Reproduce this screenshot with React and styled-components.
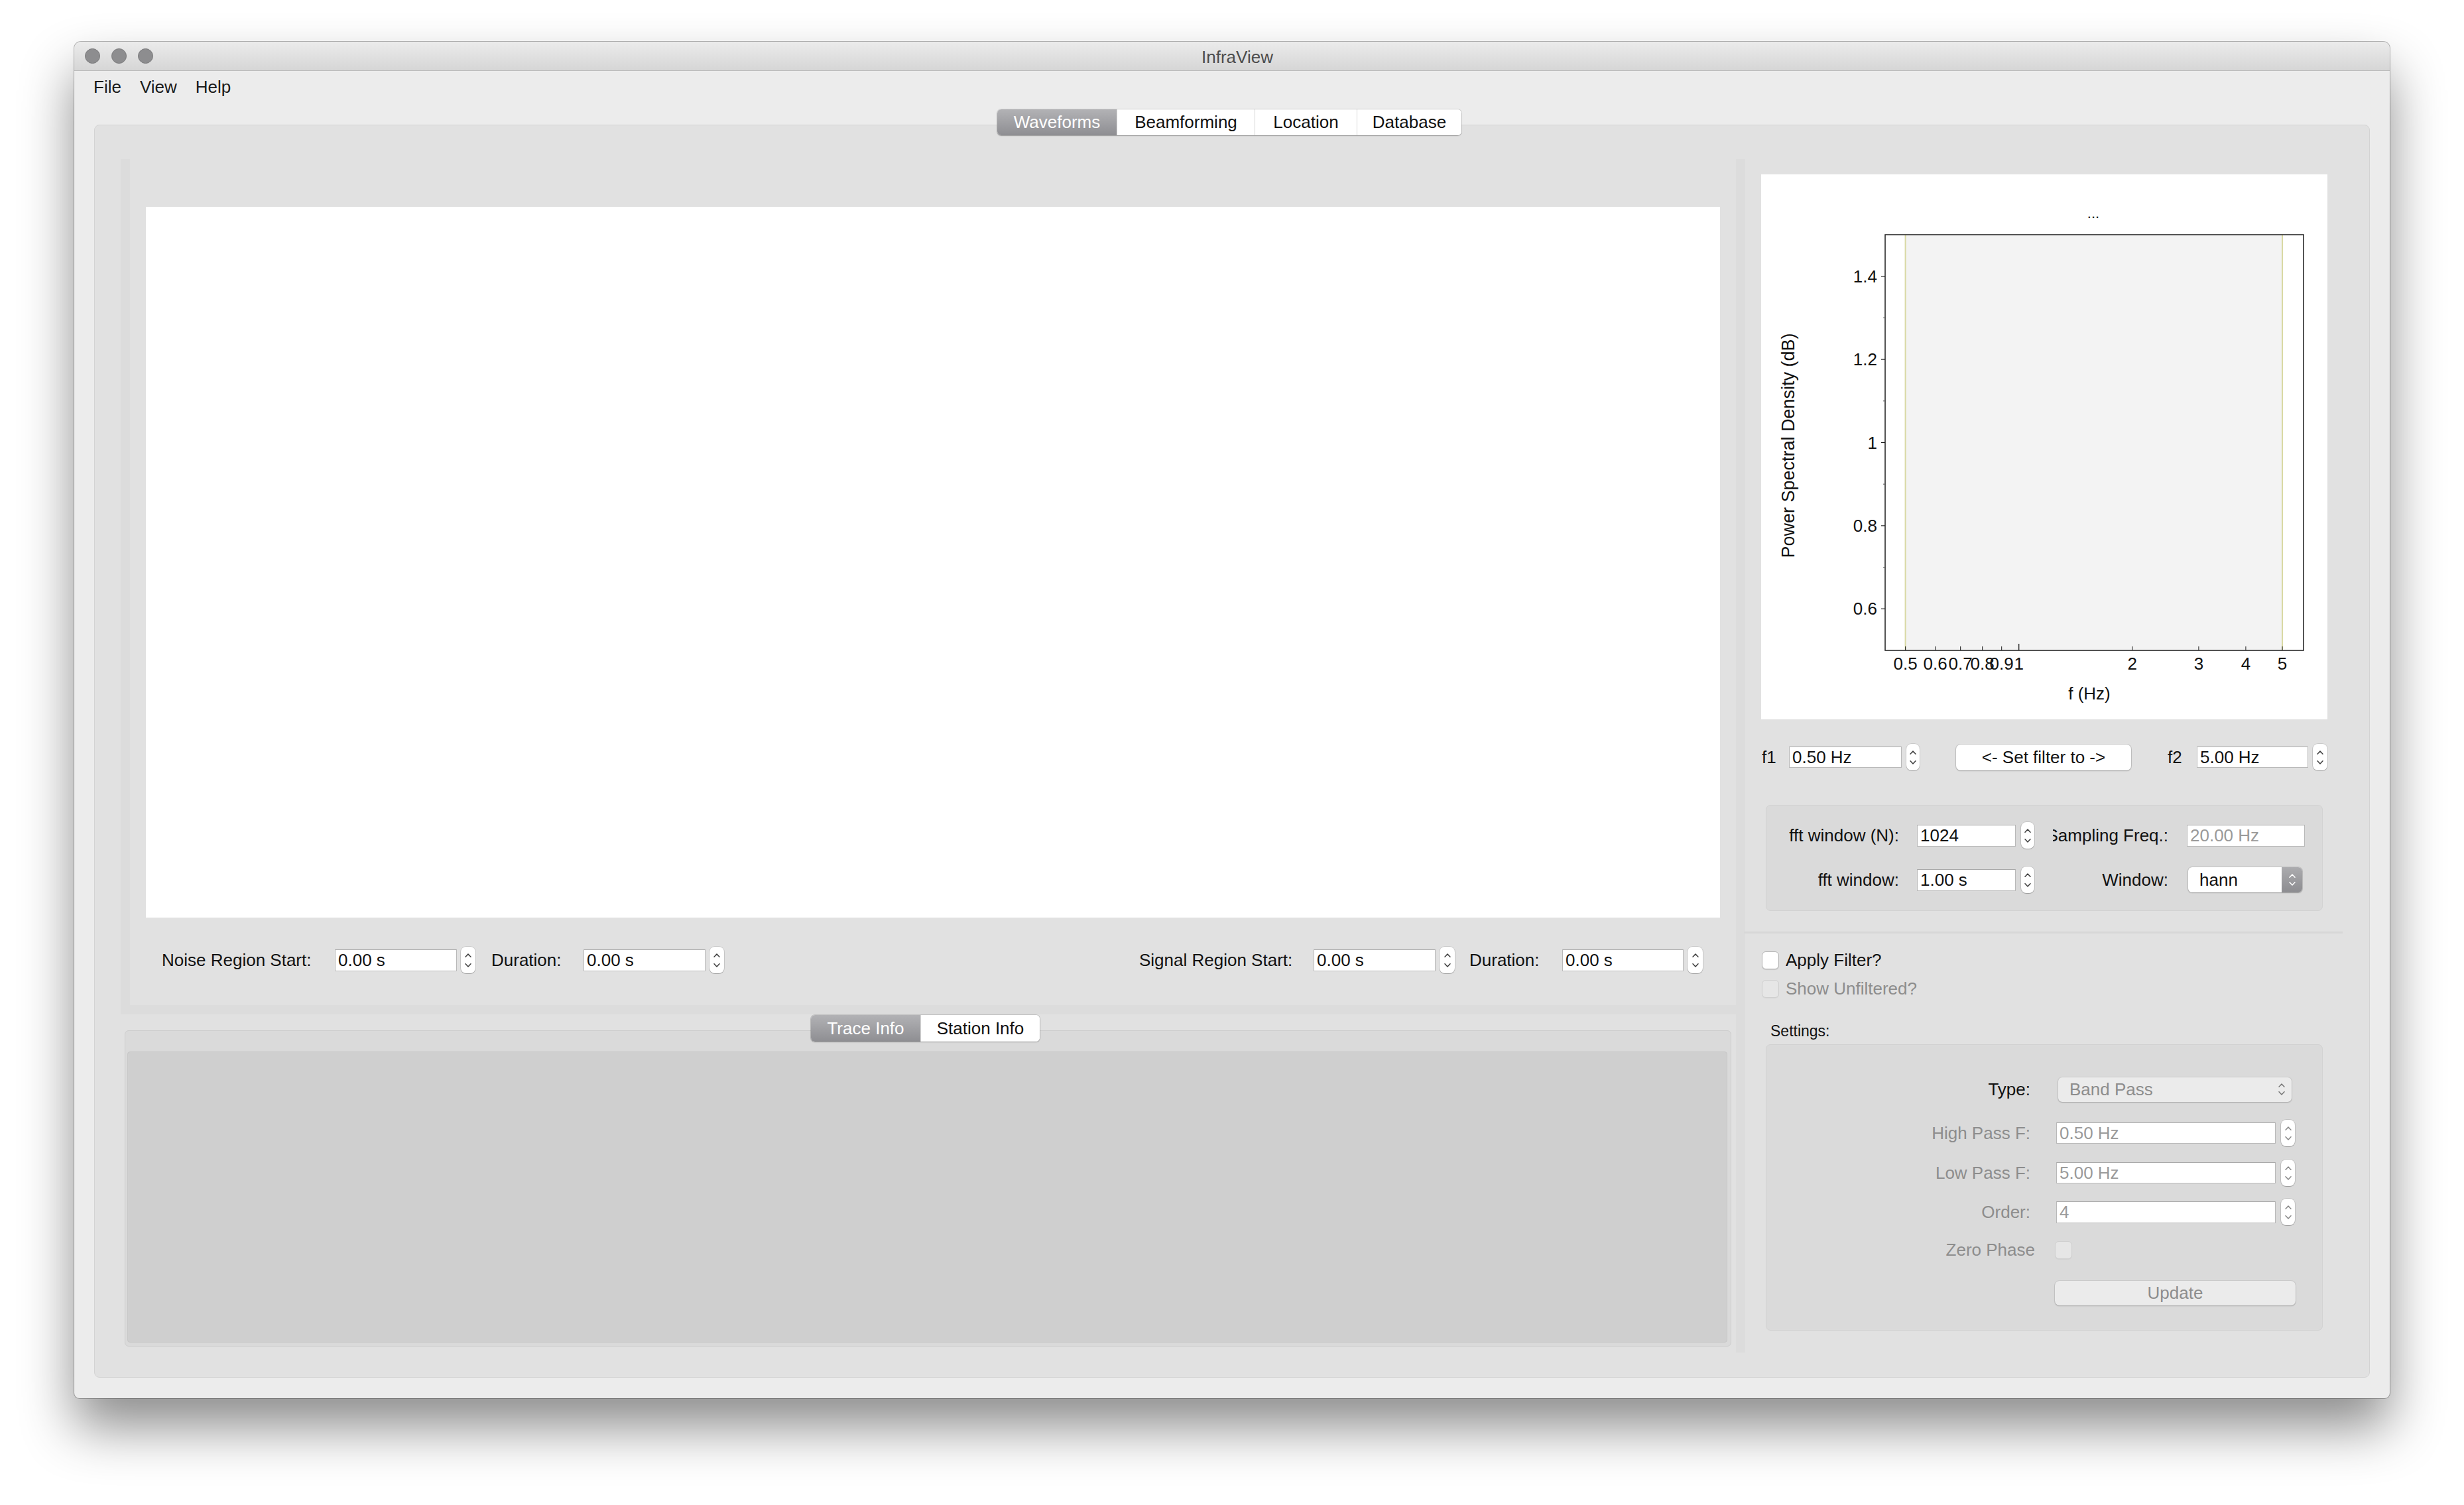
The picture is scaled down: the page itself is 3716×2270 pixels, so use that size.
import React from 'react';
import styled, { createGlobalStyle } from 'styled-components';

const GlobalStyle = createGlobalStyle`
  html, body {
    margin: 0;
    padding: 0;
    background: #ffffff;
  }
  body {
    font-family: 'Liberation Sans', Arial, sans-serif;
    font-size: 26px;
    color: #111;
  }
  * { box-sizing: border-box; }
  svg { display: block; }
`;

const Page = styled.div`
  width: 3716px;
  height: 2270px;
  overflow: hidden;
  padding: 63px 0 0 112px;
`;

const Window = styled.div`
  width: 3492px;
  height: 2046px;
  background: #ececec;
  border-radius: 10px 10px 8px 8px;
  box-shadow: 0 0 0 1px rgba(0, 0, 0, 0.28), 0 44px 80px rgba(0, 0, 0, 0.45);
  display: flex;
  flex-direction: column;
  overflow: hidden;
`;

const TitleBar = styled.div`
  flex: 0 0 44px;
  display: grid;
  grid-template-columns: 1fr auto 1fr;
  align-items: center;
  padding-left: 16px;
  background: linear-gradient(#ebebeb, #d6d6d6);
  border-bottom: 1px solid #bcbcbc;
`;

const Lights = styled.div`
  display: flex;
  gap: 17px;
`;

const Light = styled.span`
  width: 23px;
  height: 23px;
  border-radius: 50%;
  background: #8d8d8f;
  border: 1px solid #7a7a7c;
`;

const Title = styled.div`
  color: #4c4c4c;
  font-size: 26px;
  padding-top: 3px;
`;

const MenuBar = styled.div`
  flex: 0 0 46px;
  display: flex;
  align-items: center;
  padding: 3px 0 0 15px;
`;

const MenuItem = styled.span`
  padding: 0 14px;
  color: #1a1a1a;
`;

const TabArea = styled.div`
  flex: 1;
  display: flex;
  flex-direction: column;
  padding: 12px 30px 31px 30px;
`;

const SegBar = styled.div`
  align-self: center;
  display: flex;
  height: ${p => p.$h}px;
  background: #fff;
  border-radius: 6px;
  box-shadow: 0 0 0 1px rgba(0, 0, 0, 0.13), 0 1px 2px rgba(0, 0, 0, 0.22);
  position: relative;
  z-index: 1;
  overflow: hidden;
  transform: translateX(${p => p.$shift || 0}px);
`;

const SegTab = styled.div`
  width: ${p => p.$w}px;
  display: flex;
  align-items: center;
  justify-content: center;
  color: ${p => (p.$active ? '#fff' : '#111')};
  background: ${p => (p.$active ? 'linear-gradient(#b2b2b5, #8e8e92)' : '#fff')};
  border-left: ${p => (p.$first || p.$active ? 'none' : '1px solid #d6d6d6')};
`;

const Frame = styled.div`
  flex: 1;
  margin-top: -16px;
  background: #e1e1e1;
  border: 1px solid #d3d3d3;
  border-radius: 8px;
  padding: 51px 39px 37px 39px;
  display: flex;
`;

const LeftColumn = styled.div`
  flex: 0 0 2436px;
  display: flex;
  flex-direction: column;
`;

const TopSplit = styled.div`
  flex: 0 0 1290px;
  display: flex;
  background: #dcdcdc;
  padding: 0 0 14px 14px;
`;

const WavePanel = styled.div`
  flex: 1;
  display: flex;
  flex-direction: column;
  background: #e1e1e1;
  padding: 72px 24px 0 24px;
`;

const WaveCanvas = styled.div`
  flex: 0 0 1072px;
  background: #ffffff;
`;

const RegionRow = styled.div`
  margin-top: 44px;
  height: 40px;
  display: flex;
  align-items: center;
  justify-content: space-between;
  padding: 0 26px 0 24px;
`;

const Group = styled.div`
  display: flex;
  align-items: center;
`;

const Label = styled.span`
  flex: 0 0 auto;
  display: flex;
  justify-content: ${p => (p.$align === 'right' ? 'flex-end' : 'flex-start')};
  width: ${p => (p.$w ? `${p.$w}px` : 'auto')};
  margin-left: ${p => p.$ml || 0}px;
  margin-right: ${p => p.$mr || 0}px;
  white-space: nowrap;
  overflow: hidden;
  color: ${p => (p.$dim ? '#8d8d8d' : '#111')};
  font-size: ${p => p.$size || 26}px;
`;

const Field = styled.input`
  flex: 0 0 auto;
  width: ${p => p.$w}px;
  height: ${p => p.$h || 33}px;
  margin-left: ${p => p.$ml || 0}px;
  padding: 0 0 0 4px;
  font-family: inherit;
  font-size: 26px;
  color: ${p => (p.$dim ? '#9a9a9a' : '#111')};
  background: #fff;
  border: 1px solid #b9b9b9;
  border-top-color: #a9a9a9;
  border-radius: 0;
  outline: none;
`;

const SpinBox = styled.div`
  flex: 0 0 auto;
  width: ${p => p.$w || 22}px;
  height: 40px;
  margin-left: ${p => p.$ml ?? 6}px;
  border-radius: 8px;
  background: #fff;
  box-shadow: 0 0 0 1px rgba(0, 0, 0, 0.1), 0 1px 1px rgba(0, 0, 0, 0.2);
  display: flex;
  flex-direction: column;
  align-items: center;
  justify-content: center;
  gap: 9px;
`;

const RightHandle = styled.div`
  flex: 0 0 14px;
  background: #dcdcdc;
`;

const BottomSplit = styled.div`
  flex: 1;
  display: flex;
  flex-direction: column;
  padding: 1px 7px 9px 6px;
`;

const InfoFrame = styled.div`
  flex: 1;
  margin-top: -17px;
  background: #dadada;
  border: 1px solid #cdcdcd;
  border-radius: 6px;
  padding: 31px 5px 5px 3px;
  display: flex;
`;

const InfoPane = styled.div`
  flex: 1;
  background: #cfcfcf;
  border: 1px solid #c7c7c7;
  border-radius: 4px;
`;

const RightPanel = styled.div`
  flex: 1;
  display: flex;
  flex-direction: column;
  padding: 23px 24px 0 24px;
`;

const PlotBox = styled.div`
  flex: 0 0 822px;
  min-height: 0;
  background: #fff;
`;

const FreqRow = styled.div`
  margin-top: 37px;
  flex: 0 0 40px;
  min-height: 0;
  display: flex;
  align-items: center;
  justify-content: space-between;
`;

const PushButton = styled.div`
  width: ${p => p.$w}px;
  height: ${p => p.$h || 39}px;
  margin-left: ${p => p.$ml || 0}px;
  border-radius: 7px;
  background: ${p => (p.$disabled ? '#ebebeb' : '#fff')};
  color: ${p => (p.$disabled ? '#8d8d8d' : '#111')};
  box-shadow: 0 0 0 1px rgba(0, 0, 0, ${p => (p.$disabled ? 0.06 : 0.1)}), 0 1px 2px rgba(0, 0, 0, 0.22);
  display: flex;
  align-items: center;
  justify-content: center;
`;

const GroupBox = styled.div`
  flex: 0 0 ${p => p.$h}px;
  min-height: 0;
  margin: ${p => p.$mt}px 7px 0 7px;
  background: #dadada;
  border: 1px solid #d2d2d2;
  border-radius: 7px;
  padding: ${p => p.$pad};
  display: flex;
  flex-direction: column;
`;

const BoxRow = styled.div`
  flex: 0 0 40px;
  margin-top: ${p => p.$mt || 0}px;
  display: flex;
  align-items: center;
`;

const FormRow = styled.div`
  flex: 0 0 40px;
  margin-top: ${p => p.$mt || 0}px;
  display: grid;
  grid-template-columns: 1fr 362px;
  column-gap: 38px;
  align-items: center;
`;

const FieldCell = styled.div`
  display: flex;
  align-items: center;
`;

const Combo = styled.div`
  width: ${p => p.$w}px;
  height: ${p => p.$h}px;
  margin-left: ${p => p.$ml || 0}px;
  border-radius: 6px;
  background: ${p => (p.$disabled ? '#ebebeb' : '#fff')};
  color: ${p => (p.$disabled ? '#8d8d8d' : '#111')};
  box-shadow: 0 0 0 1px rgba(0, 0, 0, ${p => (p.$disabled ? 0.06 : 0.1)}), 0 1px 2px rgba(0, 0, 0, 0.2);
  display: flex;
  align-items: center;
  overflow: hidden;
`;

const ComboText = styled.span`
  flex: 1;
  padding-left: 17px;
`;

const ComboArrows = styled.div`
  width: ${p => p.$w}px;
  align-self: stretch;
  background: ${p => (p.$accent ? 'linear-gradient(#ababae, #8c8c90)' : 'transparent')};
  display: flex;
  flex-direction: column;
  align-items: center;
  justify-content: center;
  gap: 6px;
`;

const Divider = styled.div`
  flex: 0 0 3px;
  margin: 31px -23px 0 -26px;
  background: #d7d7d7;
`;

const CheckRow = styled.div`
  flex: 0 0 27px;
  min-height: 0;
  margin-top: ${p => p.$mt}px;
  display: flex;
  align-items: center;
  gap: 10px;
  padding-left: 1px;
`;

const CheckBox = styled.span`
  flex: 0 0 auto;
  width: 26px;
  height: 27px;
  margin-left: ${p => p.$ml || 0}px;
  border-radius: 6px;
  background: ${p => (p.$disabled ? '#e6e6e6' : '#fff')};
  border: 1px solid ${p => (p.$disabled ? '#cfcfcf' : '#b3b3b3')};
  box-shadow: 0 1px 1px rgba(0, 0, 0, ${p => (p.$disabled ? 0.04 : 0.12)});
`;

const SectionTitle = styled.div`
  flex: 0 0 26px;
  margin: 37px 0 0 14px;
  line-height: 26px;
  font-size: 23px;
  color: #111;
`;

const Chevron = ({ dir, color = '#3c3c3c' }) => (
  <svg width="10" height="6" viewBox="0 0 10 6">
    <path
      d={dir === 'up' ? 'M1 5.2 L5 1 L9 5.2' : 'M1 0.8 L5 5 L9 0.8'}
      fill="none"
      stroke={color}
      strokeWidth="1.5"
      strokeLinecap="round"
      strokeLinejoin="round"
    />
  </svg>
);

const Spinner = ({ ml, w, color }) => (
  <SpinBox $ml={ml} $w={w}>
    <Chevron dir="up" color={color} />
    <Chevron dir="down" color={color} />
  </SpinBox>
);

// log-x / linear-y mapping of the empty PSD plot
const xOf = f => 217.6 + 568.4 * Math.log10(f / 0.5);
const yOf = v => 91 + (1.5 - v) * 627;

const xTicks = [
  { f: 0.5, label: '0.5', major: false },
  { f: 0.6, label: '0.6', major: false },
  { f: 0.7, label: '0.7', major: false },
  { f: 0.8, label: '0.8', major: false },
  { f: 0.9, label: '0.9', major: false },
  { f: 1, label: '1', major: true },
  { f: 2, label: '2', major: false },
  { f: 3, label: '3', major: false },
  { f: 4, label: '4', major: false },
  { f: 5, label: '5', major: false },
];

const yMajor = [0.6, 0.8, 1, 1.2, 1.4];
const yMinor = [0.7, 0.9, 1.1, 1.3];

const SpectrumPlot = () => (
  <svg width="854" height="822" viewBox="0 0 854 822" fontFamily="'Liberation Sans', Arial, sans-serif">
    <rect x={xOf(0.5)} y="91" width={xOf(5) - xOf(0.5)} height="627" fill="#f3f3f3" />
    <line x1={xOf(0.5)} y1="91" x2={xOf(0.5)} y2="718" stroke="#d9d9a4" strokeWidth="2" />
    <line x1={xOf(5)} y1="91" x2={xOf(5)} y2="718" stroke="#d9d9a4" strokeWidth="2" />
    <rect x="187" y="91" width="631" height="627" fill="none" stroke="#1c1c1c" strokeWidth="1.5" />
    <text x="501" y="66" fontSize="22" textAnchor="middle" fill="#111">...</text>
    {yMajor.map(v => (
      <g key={v}>
        <line x1="181" y1={yOf(v)} x2="187" y2={yOf(v)} stroke="#1c1c1c" strokeWidth="1.2" />
        <text x="175" y={yOf(v) + 9} fontSize="26" textAnchor="end" fill="#111">{String(v)}</text>
      </g>
    ))}
    {yMinor.map(v => (
      <line key={v} x1="184" y1={yOf(v)} x2="187" y2={yOf(v)} stroke="#555" strokeWidth="1" />
    ))}
    {xTicks.map(t => (
      <g key={t.label}>
        <line x1={xOf(t.f)} y1={t.major ? 708 : 712} x2={xOf(t.f)} y2="718" stroke="#1c1c1c" strokeWidth={t.major ? 1.3 : 1} />
        <text x={xOf(t.f)} y="747" fontSize="26" textAnchor="middle" fill="#111">{t.label}</text>
      </g>
    ))}
    <text x="495" y="792" fontSize="26" textAnchor="middle" fill="#111">f (Hz)</text>
    <text transform="translate(50 409) rotate(-90)" fontSize="27" textAnchor="middle" fill="#111">
      Power Spectral Density (dB)
    </text>
  </svg>
);

const App = () => (
  <Page>
    <GlobalStyle />
    <Window>
      <TitleBar>
        <Lights>
          <Light />
          <Light />
          <Light />
        </Lights>
        <Title>InfraView</Title>
        <span />
      </TitleBar>
      <MenuBar>
        <MenuItem>File</MenuItem>
        <MenuItem>View</MenuItem>
        <MenuItem>Help</MenuItem>
      </MenuBar>
      <TabArea>
        <SegBar $h={39} $shift={-4}>
          <SegTab $w={180} $active $first>Waveforms</SegTab>
          <SegTab $w={208}>Beamforming</SegTab>
          <SegTab $w={154}>Location</SegTab>
          <SegTab $w={158}>Database</SegTab>
        </SegBar>
        <Frame>
          <LeftColumn>
            <TopSplit>
              <WavePanel>
                <WaveCanvas />
                <RegionRow>
                  <Group>
                    <Label $w={261}>Noise Region Start:</Label>
                    <Field $w={184} defaultValue="0.00 s" />
                    <Spinner />
                    <Label $w={139} $ml={24}>Duration:</Label>
                    <Field $w={184} defaultValue="0.00 s" />
                    <Spinner />
                  </Group>
                  <Group>
                    <Label $w={263}>Signal Region Start:</Label>
                    <Field $w={184} defaultValue="0.00 s" />
                    <Spinner w={23} />
                    <Label $w={140} $ml={22}>Duration:</Label>
                    <Field $w={183} defaultValue="0.00 s" />
                    <Spinner w={23} />
                  </Group>
                </RegionRow>
              </WavePanel>
            </TopSplit>
            <BottomSplit>
              <SegBar $h={40} $shift={-4}>
                <SegTab $w={165} $active $first>Trace Info</SegTab>
                <SegTab $w={180}>Station Info</SegTab>
              </SegBar>
              <InfoFrame>
                <InfoPane />
              </InfoFrame>
            </BottomSplit>
          </LeftColumn>
          <RightHandle />
          <RightPanel>
            <PlotBox>
              <SpectrumPlot />
            </PlotBox>
            <FreqRow>
              <Group>
                <Label $w={41} $ml={1}>f1</Label>
                <Field $w={170} $h={32} defaultValue="0.50 Hz" />
                <Spinner ml={7} w={20} />
              </Group>
              <PushButton $w={264}>&lt;- Set filter to -&gt;</PushButton>
              <Group>
                <Label $w={44}>f2</Label>
                <Field $w={168} $h={32} defaultValue="5.00 Hz" />
                <Spinner ml={7} w={22} />
              </Group>
            </FreqRow>
            <GroupBox $mt={52} $h={160} $pad="25px 26px 26px 19px">
              <BoxRow>
                <Label $w={181} $align="right">fft window (N):</Label>
                <Field $w={149} $ml={27} defaultValue="1024" />
                <Spinner ml={8} w={20} />
                <Label $w={174} $ml={28} $align="right">Sampling Freq.:</Label>
                <Field $w={178} $ml={28} $dim defaultValue="20.00 Hz" />
              </BoxRow>
              <BoxRow $mt={27}>
                <Label $w={181} $align="right">fft window:</Label>
                <Field $w={149} $ml={27} defaultValue="1.00 s" />
                <Spinner ml={8} w={20} />
                <Label $w={176} $ml={26} $align="right">Window:</Label>
                <Combo $w={172} $h={38} $ml={30}>
                  <ComboText>hann</ComboText>
                  <ComboArrows $w={31} $accent>
                    <Chevron dir="up" color="#fff" />
                    <Chevron dir="down" color="#fff" />
                  </ComboArrows>
                </Combo>
              </BoxRow>
            </GroupBox>
            <Divider />
            <CheckRow $mt={27}>
              <CheckBox />
              <Label>Apply Filter?</Label>
            </CheckRow>
            <CheckRow $mt={16}>
              <CheckBox $disabled />
              <Label $dim>Show Unfiltered?</Label>
            </CheckRow>
            <SectionTitle>Settings:</SectionTitle>
            <GroupBox $mt={7} $h={432} $pad="47px 40px 0 19px">
              <FormRow>
                <Label $align="right">Type:</Label>
                <FieldCell>
                  <Combo $w={352} $h={37} $ml={4} $disabled>
                    <ComboText>Band Pass</ComboText>
                    <ComboArrows $w={30}>
                      <Chevron dir="up" color="#777" />
                      <Chevron dir="down" color="#777" />
                    </ComboArrows>
                  </Combo>
                </FieldCell>
              </FormRow>
              <FormRow $mt={26}>
                <Label $align="right" $dim>High Pass F:</Label>
                <FieldCell>
                  <Field $w={331} $h={32} $ml={1} $dim defaultValue="0.50 Hz" />
                  <Spinner ml={8} w={21} color="#888" />
                </FieldCell>
              </FormRow>
              <FormRow $mt={20}>
                <Label $align="right" $dim>Low Pass F:</Label>
                <FieldCell>
                  <Field $w={331} $h={32} $ml={1} $dim defaultValue="5.00 Hz" />
                  <Spinner ml={8} w={21} color="#888" />
                </FieldCell>
              </FormRow>
              <FormRow $mt={19}>
                <Label $align="right" $dim>Order:</Label>
                <FieldCell>
                  <Field $w={331} $h={33} $ml={1} $dim defaultValue="4" />
                  <Spinner ml={8} w={21} color="#888" />
                </FieldCell>
              </FormRow>
              <FormRow $mt={17}>
                <Label $align="right" $dim $mr={-7}>Zero Phase</Label>
                <FieldCell>
                  <CheckBox $ml={-1} $disabled />
                </FieldCell>
              </FormRow>
              <FormRow $mt={25}>
                <span />
                <PushButton $w={363} $h={37} $ml={-1} $disabled>Update</PushButton>
              </FormRow>
            </GroupBox>
          </RightPanel>
        </Frame>
      </TabArea>
    </Window>
  </Page>
);

export default App;
